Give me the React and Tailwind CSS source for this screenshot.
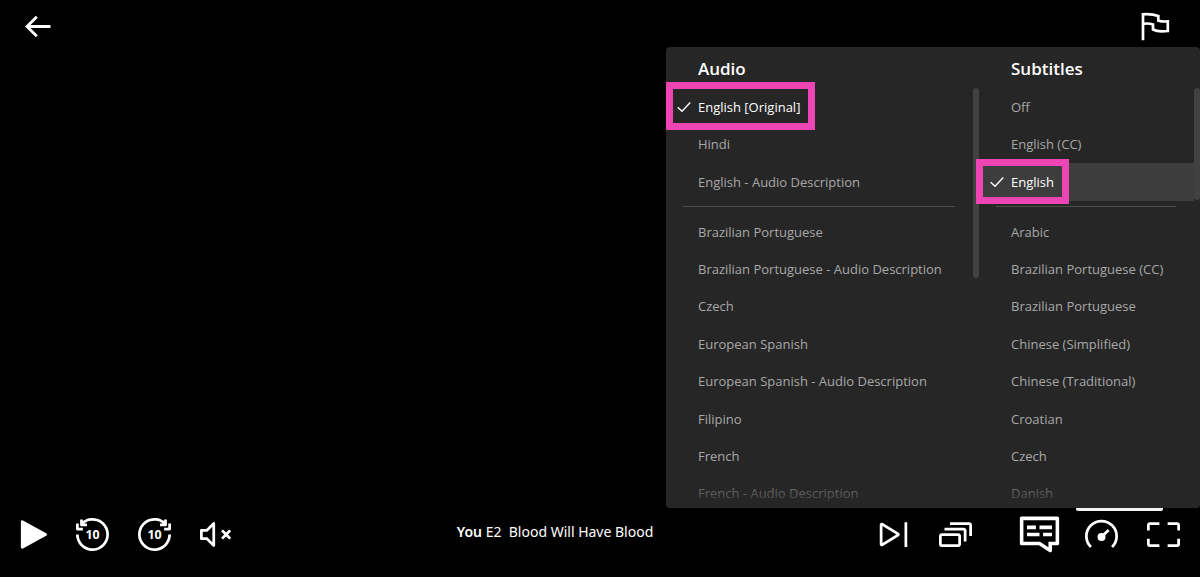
import { useState } from "react";

const audioMain = ["English [Original]", "Hindi", "English - Audio Description"];
const audioMore = [
  "Brazilian Portuguese",
  "Brazilian Portuguese - Audio Description",
  "Czech",
  "European Spanish",
  "European Spanish - Audio Description",
  "Filipino",
  "French",
  "French - Audio Description",
];
const subtitlesMain = ["Off", "English (CC)", "English"];
const subtitlesMore = [
  "Arabic",
  "Brazilian Portuguese (CC)",
  "Brazilian Portuguese",
  "Chinese (Simplified)",
  "Chinese (Traditional)",
  "Croatian",
  "Czech",
  "Danish",
];

const back10 =
  "M11.0198 2.04817C13.3222 1.8214 15.6321 2.39998 17.5557 3.68532C19.4794 4.97066 20.8978 6.88324 21.5694 9.09717C22.241 11.3111 22.1242 13.6894 21.2388 15.8269C20.3534 17.9643 18.7543 19.7286 16.714 20.8192C14.6736 21.9098 12.3182 22.2592 10.0491 21.8079C7.77999 21.3565 5.73759 20.1323 4.26989 18.3439C2.80219 16.5555 2 14.3136 2 12H0C0 14.7763 0.962627 17.4666 2.72387 19.6127C4.48511 21.7588 6.93599 23.2278 9.65891 23.7694C12.3818 24.3111 15.2083 23.8918 17.6568 22.5831C20.1052 21.2744 22.0241 19.1572 23.0866 16.5922C24.149 14.0273 24.2892 11.1733 23.4833 8.51661C22.6774 5.85989 20.9752 3.56479 18.6668 2.02238C16.3585 0.479973 13.5867 -0.214319 10.8238 0.0578004C8.71195 0.265799 6.70517 1.02858 5 2.2532V1H3V5C3 5.55228 3.44772 6 4 6H8V4H6C7.45608 2.90793 9.19066 2.22833 11.0198 2.04817ZM2 4V7H5V9H1C0.447715 9 0 8.55228 0 8V4H2Z";

function ControlButton({ label, className = "", children }) {
  return (
    <button type="button" aria-label={label} className={"size-[33px] shrink-0 cursor-pointer " + className}>
      <svg viewBox="0 0 24 24" fill="currentColor" className="size-full overflow-visible">
        {children}
      </svg>
    </button>
  );
}

function Check() {
  return (
    <svg viewBox="0 0 14 12" fill="none" stroke="currentColor" strokeWidth="1.4" className="h-3 w-3.5">
      <path d="M0.7 6.2L5 10.3L13.3 1.4" />
    </svg>
  );
}

function Track({ name, selected, onSelect, highlight, ring }) {
  return (
    <li className={"relative " + (selected && highlight ? "bg-[#3d3d3d]" : "")}>
      <button
        type="button"
        aria-pressed={selected}
        onClick={() => onSelect(name)}
        className={
          "flex size-full cursor-pointer items-center text-left whitespace-nowrap " +
          (selected ? "text-white" : "text-[#a8a8a8]")
        }
      >
        <span className="flex w-8 shrink-0 justify-end pr-[7px]">{selected && <Check />}</span>
        {name}
      </button>
      {selected && <span className={"pointer-events-none absolute z-10 border-[7px] border-[#ee45b5] " + ring} />}
    </li>
  );
}

function TrackColumn({ title, main, more, initial, highlight, ring, divider, thumb, className }) {
  const [current, setCurrent] = useState(initial);
  const row = (name) => (
    <Track
      key={name}
      name={name}
      selected={current === name}
      onSelect={setCurrent}
      highlight={highlight}
      ring={ring}
    />
  );

  return (
    <section className={"flex min-w-0 flex-col " + className}>
      <h3 className="h-[41px] pt-2 pl-8 text-[17px] leading-7 font-semibold text-white">{title}</h3>
      <div className="flex min-h-0 flex-1">
        <div className="min-w-0 flex-1">
          <ul className="grid h-[113px] auto-rows-fr">{main.map(row)}</ul>
          <hr className={"mt-[5px] mb-[6px] border-[#4d4d4d] " + divider} />
          <ul className="grid h-[299px] auto-rows-fr">{more.map(row)}</ul>
        </div>
        <div className={"w-1.5 shrink-0 rounded-full bg-[#414141] " + thumb} />
      </div>
    </section>
  );
}

export default function App() {
  return (
    <main className="relative flex h-screen flex-col justify-between overflow-hidden bg-black font-['Noto_Sans',sans-serif] text-white">
      <header className="flex items-start justify-between pt-2.5 pr-[27px] pl-[22px]">
        <button type="button" aria-label="Back" className="size-8 cursor-pointer">
          <svg viewBox="0 0 32 32" fill="none" stroke="currentColor" strokeWidth="2.8" className="size-full">
            <path d="M28.5 16.5H5M14.8 6.7L5 16.5L14.8 26.3" />
          </svg>
        </button>
        <button type="button" aria-label="Report a problem" className="size-8 cursor-pointer">
          <svg viewBox="0 0 32 32" fill="none" stroke="currentColor" strokeWidth="2.7" className="size-full">
            <path d="M2 30.3V4.3C8 3.9 13 4.4 17.3 6V10.7C20.5 11.5 24 11.6 26.8 11.4V21C21 21.8 15.5 21.5 12 19.5V14.5C9 13.4 5.5 13.3 2 13.8" />
          </svg>
        </button>
      </header>

      <div className="absolute top-[47px] right-0 bottom-[69px] w-[534px] font-['Open_Sans',sans-serif] text-[13px] leading-5">
        <div className="relative flex h-full overflow-hidden rounded-sm bg-[#262626]">
          <TrackColumn
            title="Audio"
            main={audioMain}
            more={audioMore}
            initial="English [Original]"
            ring="-top-[6px] left-0 h-12 w-[149px]"
            divider="mr-[18px] ml-[17px]"
            thumb="h-[190px]"
            className="flex-1"
          />
          <TrackColumn
            title="Subtitles"
            main={subtitlesMain}
            more={subtitlesMore}
            initial="English"
            highlight
            ring="-top-1 -left-[3px] h-[45px] w-[93px]"
            divider="mr-[18px] ml-[17px]"
            thumb="h-28"
            className="w-[221px]"
          />
          <div className="pointer-events-none absolute inset-x-0 bottom-0 h-9 bg-linear-to-t from-[#262626] to-transparent" />
        </div>
        <div className="absolute top-full right-[37px] h-[3px] w-[87px] rounded-b-xs bg-gray-100" />
      </div>

      <footer className="flex items-center pr-5 pb-[26px] pl-3.5">
        <div className="flex gap-[29px]">
          <ControlButton label="Play">
            <path d="M5 2.69127C5 1.93067 5.81547 1.44851 6.48192 1.81506L23.4069 11.1238C24.0977 11.5037 24.0977 12.4963 23.4069 12.8762L6.48192 22.1849C5.81546 22.5515 5 22.0693 5 21.3087V2.69127Z" />
          </ControlButton>
          <ControlButton label="Back 10 seconds">
            <path fillRule="evenodd" d={back10} />
            <text x="12" y="15.4" textAnchor="middle" fontSize="9" fontWeight="700">
              10
            </text>
          </ControlButton>
          <ControlButton label="Forward 10 seconds">
            <path fillRule="evenodd" d={back10} transform="matrix(-1 0 0 1 24 0)" />
            <text x="12" y="15.4" textAnchor="middle" fontSize="9" fontWeight="700">
              10
            </text>
          </ControlButton>
          <ControlButton label="Unmute">
            <path
              fillRule="evenodd"
              d="M11 4C11 3.59557 10.7564 3.23093 10.3827 3.07615C10.009 2.92137 9.57889 3.00692 9.29289 3.29292L4.58579 8H1C0.447715 8 0 8.44774 0 9V15C0 15.5523 0.447715 16 1 16H4.58579L9.29289 20.7071C9.57889 20.9931 10.009 21.0787 10.3827 20.9239C10.7564 20.7691 11 20.4045 11 20V4ZM5.70711 9.70714L9 6.41424V17.5858L5.70711 14.2929L5.41421 14H2V10H5.41421L5.70711 9.70714ZM15.2929 9.70714L17.5858 12L15.2929 14.2929L16.7071 15.7071L19 13.4142L21.2929 15.7071L22.7071 14.2929L20.4142 12L22.7071 9.70714L21.2929 8.29292L19 10.5858L16.7071 8.29292L15.2929 9.70714Z"
            />
          </ControlButton>
        </div>

        <p className="flex-1 pb-1.5 text-center text-sm whitespace-pre">
          <strong className="font-semibold">You</strong> E2{"  "}Blood Will Have Blood
        </p>

        <div className="flex gap-[29px]">
          <ControlButton label="Next episode">
            <path
              fillRule="evenodd"
              d="M22 3H20V21H22V3ZM4.28615 3.61729C3.28674 3.00228 2 3.7213 2 4.89478V19.1052C2 20.2787 3.28674 20.9977 4.28615 20.3827L15.8321 13.2775C16.7839 12.6918 16.7839 11.3082 15.8321 10.7225L4.28615 3.61729ZM4 18.2104V5.78956L14.092 12L4 18.2104Z"
            />
          </ControlButton>
          <ControlButton label="Episodes" className="mr-[22px]">
            <path
              fillRule="evenodd"
              d="M8 5H22V13H24V5C24 3.89543 23.1046 3 22 3H8V5ZM18 9H4V7H18C19.1046 7 20 7.89543 20 9V17H18V9ZM0 13C0 11.8954 0.895431 11 2 11H14C15.1046 11 16 11.8954 16 13V19C16 20.1046 15.1046 21 14 21H2C0.895431 21 0 20.1046 0 19V13ZM14 19V13H2V19H14Z"
            />
          </ControlButton>
          <ControlButton label="Audio and subtitles" className="scale-130">
            <path
              fillRule="evenodd"
              d="M1 3C1 2.44772 1.44772 2 2 2H22C22.5523 2 23 2.44772 23 3V17C23 17.5523 22.5523 18 22 18H19V21C19 21.3688 18.797 21.7077 18.4719 21.8817C18.1467 22.0557 17.7522 22.0366 17.4453 21.832L11.6972 18H2C1.44772 18 1 17.5523 1 17V3ZM3 4V16H12.3028L17 19.1315V16H21V4H3ZM10 9H5V7H10V9ZM19 11H14V13H19V11ZM12 13H5V11H12V13ZM19 7H12V9H19V7Z"
            />
          </ControlButton>
          <ControlButton label="Playback speed">
            <path d="M4.3 21.1A11 11 0 1 1 19.7 21.1" fill="none" stroke="currentColor" strokeWidth="2" />
            <circle cx="12" cy="13.8" r="2.9" />
            <path d="M12.5 13.3L17.2 8.8" stroke="currentColor" strokeWidth="2" />
          </ControlButton>
          <ControlButton label="Full screen">
            <path d="M0 5C0 3.89543 0.895431 3 2 3H9V5H2V9H0V5ZM22 5H15V3H22C23.1046 3 24 3.89543 24 5V9H22V5ZM2 15V19H9V21H2C0.895431 21 0 20.1046 0 19V15H2ZM22 19V15H24V19C24 20.1046 23.1046 21 22 21H15V19H22Z" />
          </ControlButton>
        </div>
      </footer>
    </main>
  );
}
